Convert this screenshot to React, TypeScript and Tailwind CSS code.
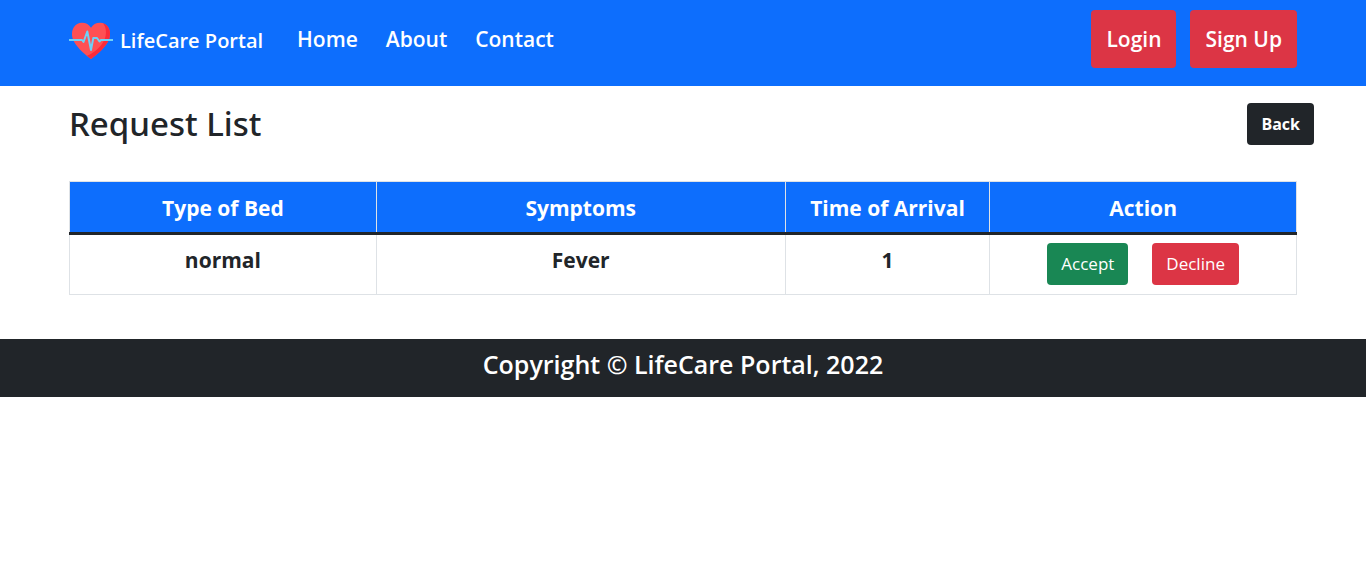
const requests = [{ bed: "normal", symptoms: "Fever", arrival: "1" }];

const navLinks = ["Home", "About", "Contact"];

function HeartLogo() {
  return (
    <svg viewBox="0 0 44 38" className="h-[38px] w-11 shrink-0" aria-hidden="true">
      <path
        d="M22 37C17 33.5 9 26.500 5.500 20.500C2.500 15.500 2.200 10 4.500 5.800C6.500 2.300 9.500.7 13 .7C17 .7 20.300 2.600 22 5.800C23.700 2.600 27 .7 31 .7C34.500 .7 37.500 2.300 39.500 5.800C41.800 10 41.500 15.500 38.500 20.500C35 26.500 27 33.500 22 37Z"
        fill="#ff5054"
      />
      <path
        d="M34 1.200C36.500 2 38.300 3.600 39.500 5.800C41.800 10 41.500 15.500 38.500 20.500C35 26.500 27 33.500 22 37C20.800 36.200 19.500 35.100 18 33.800C26 30.500 32.500 24.500 35.500 17.500C37.800 12 37.500 5.500 34 1.200Z"
        fill="#fb2b3a"
      />
      <path
        d="M0 18H13L14.500 20L18.300 9.500L22 28L24.300 16H28L30.500 19.500L32 18H44"
        fill="none"
        stroke="#6fd1f6"
        strokeWidth="2"
        strokeLinejoin="round"
      />
    </svg>
  );
}

export default function App() {
  return (
    <div className="font-['Open_Sans','Noto_Sans',sans-serif] text-[#212529]">
      <header className="bg-[#0d6efd] px-4 pt-[10px] pb-[18px] text-white">
        <nav className="mx-auto flex max-w-[1228px] items-center text-[21px] leading-[34px] font-semibold">
          <a href="#" className="mr-[34px] flex items-center gap-[7px] pt-1 text-[20px]">
            <HeartLogo />
            LifeCare Portal
          </a>
          <div className="flex gap-7">
            {navLinks.map((label) => (
              <a key={label} href="#">
                {label}
              </a>
            ))}
          </div>
          <div className="ml-auto flex gap-[14px]">
            <button type="button" className="h-[58px] rounded bg-[#dc3545] px-[15px]">
              Login
            </button>
            <button type="button" className="h-[58px] rounded bg-[#dc3545] px-[15px]">
              Sign Up
            </button>
          </div>
        </nav>
      </header>

      <main className="px-4 pt-[17px] pb-11">
        <div className="mx-auto max-w-[1228px]">
          <div className="mb-9 flex items-start justify-between">
            <h1 className="font-['Noto_Sans','Open_Sans',sans-serif] text-[33px] leading-[42px] font-medium">
              Request List
            </h1>
            <button
              type="button"
              className="-mr-[17px] h-[42px] rounded bg-[#212529] px-[14px] text-[16px] font-bold text-white"
            >
              Back
            </button>
          </div>

          <table className="w-full table-fixed border-collapse text-center text-[21px] leading-[34px] font-bold">
            <colgroup>
              <col className="w-3/12" />
              <col className="w-4/12" />
              <col className="w-2/12" />
              <col className="w-3/12" />
            </colgroup>
            <thead className="border-b-3 border-[#212529] bg-[#0d6efd] text-white">
              <tr>
                {["Type of Bed", "Symptoms", "Time of Arrival", "Action"].map((heading) => (
                  <th key={heading} scope="col" className="border-x border-t border-[#dee2e6] pt-[9px] pb-[7px]">
                    {heading}
                  </th>
                ))}
              </tr>
            </thead>
            <tbody>
              {requests.map((request) => (
                <tr key={request.bed}>
                  <td className="border-x border-b border-[#dee2e6] pt-2 pb-[9px] align-top">{request.bed}</td>
                  <td className="border-x border-b border-[#dee2e6] pt-2 pb-[9px] align-top">{request.symptoms}</td>
                  <td className="border-x border-b border-[#dee2e6] pt-2 pb-[9px] align-top">{request.arrival}</td>
                  <td className="border-x border-b border-[#dee2e6] pt-2 pb-[9px] align-top">
                    <div className="flex justify-center gap-6 text-[17px] font-normal text-white">
                      <button type="button" className="h-[42px] rounded bg-[#198754] px-[14px]">
                        Accept
                      </button>
                      <button type="button" className="h-[42px] rounded bg-[#dc3545] px-[14px]">
                        Decline
                      </button>
                    </div>
                  </td>
                </tr>
              ))}
            </tbody>
          </table>
        </div>
      </main>

      <footer className="bg-[#212529] pt-2 pb-4 text-center text-[25px] leading-[34px] font-semibold text-white">
        Copyright © LifeCare Portal, 2022
      </footer>
    </div>
  );
}
